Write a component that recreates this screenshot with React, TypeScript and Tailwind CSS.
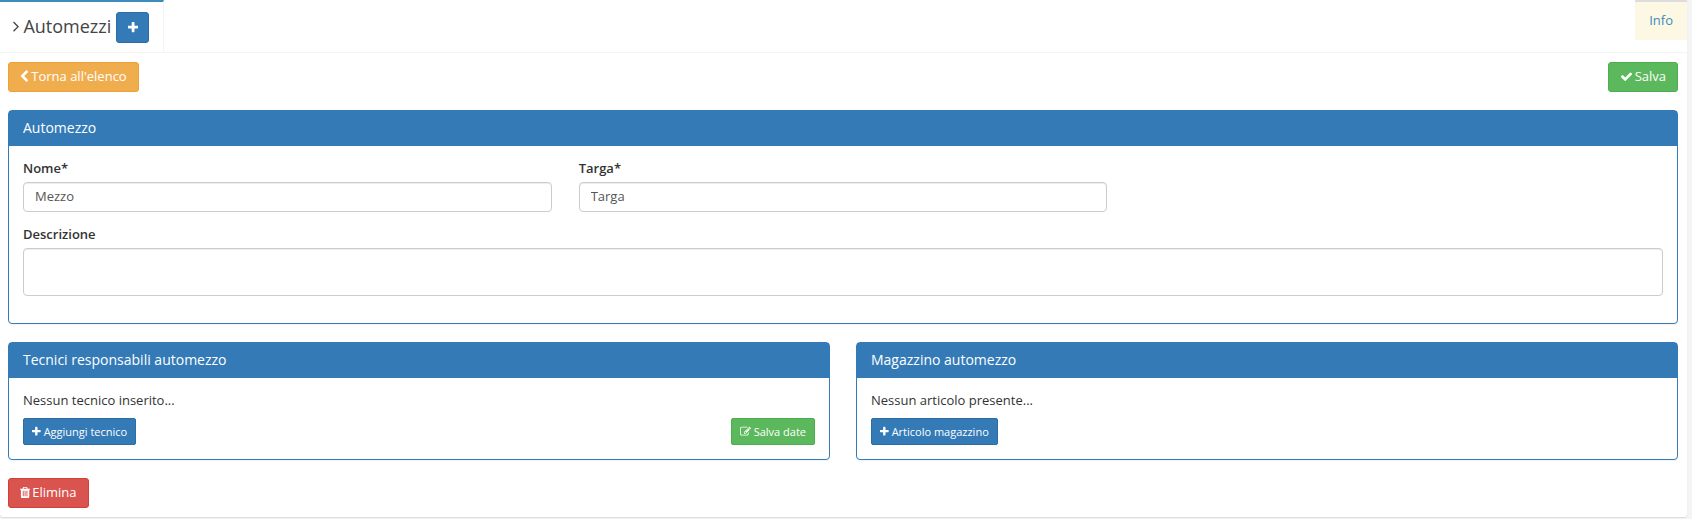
import type { ReactNode } from 'react';

const icons = {
  plus: {
    viewBox: '192 0 1408 1792',
    d: 'M1600 736v192q0 40-28 68t-68 28h-416v416q0 40-28 68t-68 28h-192q-40 0-68-28t-28-68v-416h-416q-40 0-68-28t-28-68v-192q0-40 28-68t68-28h416v-416q0-40 28-68t68-28h192q40 0 68 28t28 68v416h416q40 0 68 28t28 68z',
  },
  check: {
    viewBox: '0 0 1792 1792',
    d: 'M1671 566q0 40-28 68l-724 724-136 136q-28 28-68 28t-68-28l-136-136-362-362q-28-28-28-68t28-68l136-136q28-28 68-28t68 28l294 295 656-657q28-28 68-28t68 28l136 136q28 28 28 68z',
  },
  chevronLeft: {
    viewBox: '320 0 1280 1792',
    d: 'M1427 301l-531 531 531 531q19 19 19 45t-19 45l-166 166q-19 19-45 19t-45-19l-742-742q-19-19-19-45t19-45l742-742q19-19 45-19t45 19l166 166q19 19 19 45t-19 45z',
  },
  angleRight: {
    viewBox: '576 0 640 1792',
    d: 'M1171 960q0 13-10 23l-466 466q-10 10-23 10t-23-10l-50-50q-10-10-10-23t10-23l393-393-393-393q-10-10-10-23t10-23l50-50q10-10 23-10t23 10l466 466q10 10 10 23z',
  },
  trash: {
    viewBox: '192 0 1408 1792',
    d: 'M704 1376v-704q0-14-9-23t-23-9h-64q-14 0-23 9t-9 23v704q0 14 9 23t23 9h64q14 0 23-9t9-23zm256 0v-704q0-14-9-23t-23-9h-64q-14 0-23 9t-9 23v704q0 14 9 23t23 9h64q14 0 23-9t9-23zm256 0v-704q0-14-9-23t-23-9h-64q-14 0-23 9t-9 23v704q0 14 9 23t23 9h64q14 0 23-9t9-23zm-544-992h448l-48-117q-7-9-17-11h-317q-10 2-17 11zm928 32v64q0 14-9 23t-23 9h-96v948q0 83-47 143.5t-113 60.5h-832q-66 0-113-58.5t-47-141.5v-952h-96q-14 0-23-9t-9-23v-64q0-14 9-23t23-9h309l70-167q15-37 54-63t79-26h320q40 0 79 26t54 63l70 167h309q14 0 23 9t9 23z',
  },
  edit: {
    viewBox: '0 0 1792 1792',
    d: 'M888 1184l116-116-152-152-116 116v56h96v96h56zm440-720q-16-16-33 1l-350 350q-17 17-1 33t33-1l350-350q17-17 1-33zm80 594v190q0 119-84.5 203.5t-203.5 84.5h-832q-119 0-203.5-84.5t-84.5-203.5v-832q0-119 84.5-203.5t203.5-84.5h832q63 0 117 25 15 7 18 23 3 17-9 29l-49 49q-14 14-32 8-23-6-45-6h-832q-66 0-113 47t-47 113v832q0 66 47 113t113 47h832q66 0 113-47t47-113v-126q0-13 9-22l64-64q15-15 35-7t20 29zm-96-738l288 288-672 672h-288v-288zm444 132l-92 92-288-288 92-92q28-28 68-28t68 28l152 152q28 28 28 68t-28 68z',
  },
};

function Icon({ name }: { name: keyof typeof icons }) {
  return (
    <svg viewBox={icons[name].viewBox} className="h-[1em] w-auto shrink-0 fill-current" aria-hidden="true">
      <path d={icons[name].d} />
    </svg>
  );
}

const colors = {
  blue: 'bg-[#337ab7] border-[#2e6da4]',
  green: 'bg-[#5cb85c] border-[#4cae4c]',
  orange: 'bg-[#f0ad4e] border-[#eea236]',
  red: 'bg-[#d9534f] border-[#d43f3a]',
};

const sizes = {
  normal: 'h-[30px] px-[11px] pb-[2px] text-[13px] rounded-[3px] gap-[2px]',
  small: 'h-[27px] px-2 text-[11px] rounded-[2px] gap-[3px]',
};

type ButtonProps = {
  color: keyof typeof colors;
  size?: keyof typeof sizes;
  icon: keyof typeof icons;
  children: ReactNode;
};

function Button({ color, size = 'normal', icon, children }: ButtonProps) {
  return (
    <button
      type="button"
      className={`inline-flex items-center justify-center whitespace-nowrap border text-white ${colors[color]} ${sizes[size]}`}
    >
      <Icon name={icon} />
      {children}
    </button>
  );
}

function Panel({ title, children }: { title: string; children: ReactNode }) {
  return (
    <section className="rounded-[4px] border border-[#337ab7] bg-white shadow-[0_1px_1px_rgba(0,0,0,0.05)]">
      <h3 className="bg-[#337ab7] px-3.5 pt-[7px] pb-2 text-[14px] leading-5 text-white">{title}</h3>
      {children}
    </section>
  );
}

const labelClass = 'mb-[5px] block font-semibold leading-[18px]';
const fieldClass =
  'block w-full rounded-[4px] border border-[#ccc] bg-white px-[11px] text-[#555] shadow-[inset_0_1px_1px_rgba(0,0,0,0.075)]';

export default function App() {
  return (
    <div className="min-h-screen bg-[#f4f4f4] pr-[5px] font-['Open_Sans',sans-serif] text-[13px] leading-[18px] text-[#333]">
      <main className="rounded-b-[3px] bg-white shadow-[0_1px_1px_rgba(0,0,0,0.1)]">
        <header className="flex items-start justify-between border-b border-[#f4f4f4]">
          <div className="flex h-[52px] items-center border-t-2 border-r border-t-[#3c8dbc] border-r-[#f4f4f4] pr-3.5 pl-[13px] text-[18px] text-[#444]">
            <h1 className="mr-[5px] flex items-center gap-1 pb-[3px]">
              <Icon name="angleRight" />
              Automezzi
            </h1>
            <button
              type="button"
              aria-label="Aggiungi automezzo"
              className="flex h-[31px] w-[33px] items-center justify-center rounded-[3px] border border-[#2e6da4] bg-[#337ab7] text-[13px] text-white"
            >
              <Icon name="plus" />
            </button>
          </div>
          <a
            href="#info"
            className="h-10 border-t-2 border-[#ddd] bg-[#fcf8e3] px-3.5 pt-[9px] text-[#3c8dbc]"
          >
            Info
          </a>
        </header>

        <div className="pt-[9px] pr-[9px] pb-[9px] pl-2">
          <div className="mb-[18px] flex items-center justify-between">
            <Button color="orange" icon="chevronLeft">Torna all'elenco</Button>
            <Button color="green" icon="check">Salva</Button>
          </div>

          <Panel title="Automezzo">
            <form className="px-3.5 pt-[13px] pb-[27px]">
              <div className="mb-[13px] grid grid-cols-3 gap-x-[27px]">
                <div>
                  <label htmlFor="nome" className={labelClass}>Nome*</label>
                  <input id="nome" type="text" defaultValue="Mezzo" className={`h-[30px] pb-[2px] ${fieldClass}`} />
                </div>
                <div>
                  <label htmlFor="targa" className={labelClass}>Targa*</label>
                  <input id="targa" type="text" defaultValue="Targa" className={`h-[30px] pb-[2px] ${fieldClass}`} />
                </div>
              </div>
              <label htmlFor="descrizione" className={labelClass}>Descrizione</label>
              <textarea id="descrizione" rows={2} className={`h-12 resize-none py-[5px] ${fieldClass}`} />
            </form>
          </Panel>

          <div className="my-[18px] grid grid-cols-2 gap-x-[26px]">
            <Panel title="Tecnici responsabili automezzo">
              <div className="px-3.5 pt-[13px] pb-3.5">
                <p className="mb-[9px]">Nessun tecnico inserito...</p>
                <div className="flex justify-between">
                  <Button color="blue" size="small" icon="plus">Aggiungi tecnico</Button>
                  <Button color="green" size="small" icon="edit">Salva date</Button>
                </div>
              </div>
            </Panel>
            <Panel title="Magazzino automezzo">
              <div className="px-3.5 pt-[13px] pb-3.5">
                <p className="mb-[9px]">Nessun articolo presente...</p>
                <div className="flex">
                  <Button color="blue" size="small" icon="plus">Articolo magazzino</Button>
                </div>
              </div>
            </Panel>
          </div>

          <div className="flex">
            <Button color="red" icon="trash">Elimina</Button>
          </div>
        </div>
      </main>
    </div>
  );
}
